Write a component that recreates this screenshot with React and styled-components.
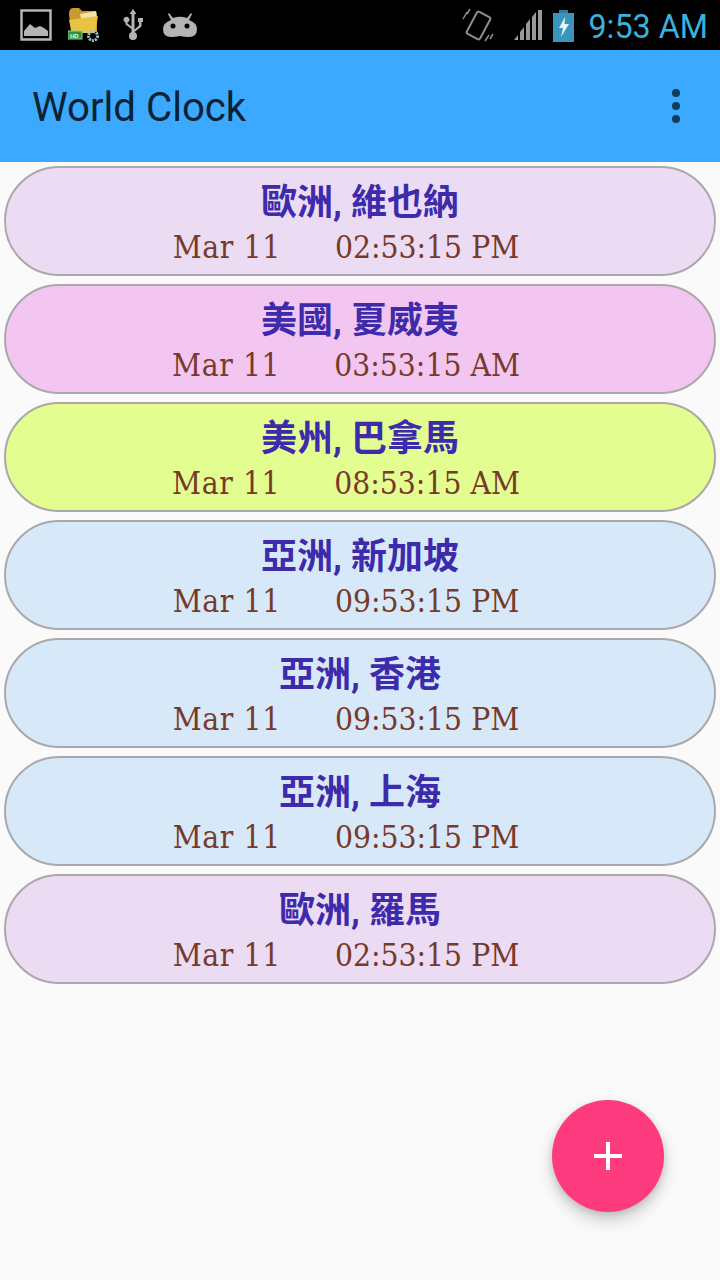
import React from "react";
import styled, { createGlobalStyle } from "styled-components";

const Global = createGlobalStyle`
  html, body { margin: 0; padding: 0; background: #fafafa; }
  #root { width: 720px; height: 1280px; }
`;
const Page = styled.div`
  position: relative; width: 720px; height: 1280px; overflow: hidden;
  background: #fafafa; display: flex; flex-direction: column;
`;
const StatusBar = styled.div`
  height: 50px; background: #000; display: flex; align-items: center; justify-content: space-between;
  padding: 0 12px 0 20px; box-sizing: border-box;
`;
const IconGroup = styled.div`display: flex; align-items: center;`;
const Glyph = styled.svg`
  flex: none;
  margin-left: ${p => p.$left || 0}px;
  margin-top: ${p => p.$top || 0}px;
`;
const Clock = styled.span`
  font: 400 32.3px/50px Roboto, sans-serif; color: #3ab2dc; margin-left: 14px; padding-top: 3px;
`;
const AppBar = styled.header`
  height: 112px; background: #3aa9ff; display: flex; align-items: center; justify-content: space-between;
  padding: 4px 40px 0 32px; box-sizing: border-box;
`;
const Title = styled.h1`
  margin: 0; font: 400 40.2px/1 Roboto, sans-serif; color: #0c2233;
`;
const Dots = styled.div`display: flex; flex-direction: column; gap: 5px; margin-top: -4px;`;
const Dot = styled.span`width: 8px; height: 8px; border-radius: 50%; background: #123c5c;`;
const List = styled.div`display: flex; flex-direction: column; gap: 8px; padding: 4px 4px 0;`;
const Row = styled.div`
  height: 110px; box-sizing: border-box; border: 2px solid #aaa8aa; border-radius: 55px;
  background: ${p => p.$bg}; display: flex; flex-direction: column; align-items: center;
`;
const City = styled.div`
  font: 700 36px/52px Roboto, "Noto Sans CJK TC", sans-serif; color: #3d2bac; margin-top: 9px;
  height: 46px;
`;
const When = styled.div`
  display: flex; gap: 54px; font: 400 31.5px/40px "DejaVu Serif Condensed", "DejaVu Serif", serif; color: #773a2a;
  margin-top: 4px; margin-right: 28px;
`;
const DateText = styled.span`letter-spacing: 0.6px;`;
const Fab = styled.button`
  position: absolute; left: 552px; top: 1100px; width: 112px; height: 112px; border: 0; border-radius: 50%;
  background: #ff3b7f; box-shadow: 0 8px 16px rgba(0,0,0,.2), 0 2px 6px rgba(0,0,0,.1);
  display: flex; align-items: center; justify-content: center; padding: 0;
`;

const rows = [
  ["歐洲, 維也納", "Mar 11", "02:53:15 PM", "#ecdcf3"],
  ["美國, 夏威夷", "Mar 11", "03:53:15 AM", "#f2c6f0"],
  ["美州, 巴拿馬", "Mar 11", "08:53:15 AM", "#e3fd91"],
  ["亞洲, 新加坡", "Mar 11", "09:53:15 PM", "#d7e9f9"],
  ["亞洲, 香港", "Mar 11", "09:53:15 PM", "#d7e9f9"],
  ["亞洲, 上海", "Mar 11", "09:53:15 PM", "#d7e9f9"],
  ["歐洲, 羅馬", "Mar 11", "02:53:15 PM", "#ecdcf3"],
];

const G = "#b4b4b4";
const PictureIcon = () => (
  <Glyph width="32" height="32" viewBox="0 0 32 32">
    <rect x="1.5" y="1.5" width="29" height="29" fill="none" stroke={G} strokeWidth="2.5" />
    <path d="M4 27V22L10 15L15 19L20 17L24 19L28 22V27Z" fill={G} />
  </Glyph>
);
const FolderIcon = () => (
  <Glyph width="34" height="34" viewBox="0 0 34 34" $left={16}>
    <path d="M1 6Q1 0 5 0H11L14 3H26Q29 3 29 8V24H3Z" fill="#c99a2c" />
    <path d="M12 6L28 3L29 12L14 15Z" fill="#f3e3a8" />
    <path d="M1 12L30 8L27 25H4Z" fill="#eac344" />
    <rect x="0" y="23" width="14" height="8" fill="#2f8f3a" stroke="#8fd08a" strokeWidth="1" />
    <text x="2" y="30" fontFamily="Liberation Sans" fontSize="6" fontWeight="700" fill="#e8ffe8">HD</text>
    <circle cx="25" cy="28" r="4.500" fill="none" stroke="#9fc0d0" strokeWidth="3" strokeDasharray="2 1" />
  </Glyph>
);
const UsbIcon = () => (
  <Glyph width="22" height="32" viewBox="0 0 22 32" $left={20}>
    <path d="M11 0L14.500 5H12.500V20.500L17 16.500V13H16V9H21V13H19.500V17.500L12.500 23V25H9.500V20L3.500 15.500V13.500A3 3 0 1 1 5.500 13.500V14.500L9.500 17.500V5H7.500Z" fill={G} />
    <circle cx="11" cy="27" r="4" fill={G} />
  </Glyph>
);
const AndroidIcon = () => (
  <Glyph width="36" height="28" viewBox="0 0 36 28" $left={18} $top={2}>
    <path d="M7 1L11 6Q18 3.500 25 6L29 1L30 2L27 8Q35 11 35 17Q35 25 27 25Q22 25 18 24Q14 25 9 25Q1 25 1 17Q1 11 9 8L6 2Z" fill={G} />
    <circle cx="11" cy="14" r="2.500" fill="#000" />
    <circle cx="25" cy="14" r="2.500" fill="#000" />
  </Glyph>
);
const VibrateIcon = () => (
  <Glyph width="32" height="34" viewBox="0 0 32 34" fill="none" stroke="#8e8e8e">
    <rect x="9" y="5" width="15" height="25" rx="2" strokeWidth="2" transform="rotate(28 16.500 17.500)" />
    <path d="M1 11L5 4M5 6L8 1M23 33L27 27M28 31L31 26" strokeWidth="1.500" />
  </Glyph>
);
const SignalIcon = () => (
  <Glyph width="30" height="32" viewBox="0 0 30 32" $left={19}>
    <path d="M1 31L5 26V31ZM7 31V23L11 18V31ZM13 31V15L17 10V31ZM19 31V8L23 3V31ZM25 31V1H29V31Z" fill="#9a9a9a" />
  </Glyph>
);
const BatteryIcon = () => (
  <Glyph width="21" height="32" viewBox="0 0 21 32" $left={10} $top={2}>
    <rect x="6" y="0" width="9" height="3" fill="#2f7c9c" />
    <rect x="0" y="3" width="21" height="29" fill="#3a95bd" />
    <path d="M12 7L6 18H10L8 27L16 14H11.500Z" fill="#e8f4f8" />
  </Glyph>
);

export default function App() {
  return (
    <Page>
      <Global />
      <StatusBar>
        <IconGroup>
          <PictureIcon />
          <FolderIcon />
          <UsbIcon />
          <AndroidIcon />
        </IconGroup>
        <IconGroup>
          <VibrateIcon />
          <SignalIcon />
          <BatteryIcon />
          <Clock>9:53 AM</Clock>
        </IconGroup>
      </StatusBar>
      <AppBar>
        <Title>World Clock</Title>
        <Dots><Dot /><Dot /><Dot /></Dots>
      </AppBar>
      <List>
        {rows.map(([city, date, time, bg]) => (
          <Row key={city} $bg={bg}>
            <City>{city}</City>
            <When><DateText>{date}</DateText><span>{time}</span></When>
          </Row>
        ))}
      </List>
      <Fab aria-label="Add">
        <svg width="30" height="30" viewBox="0 0 30 30"><path d="M13 1h4v12h12v4H17v12h-4V17H1v-4h12z" fill="#fff" /></svg>
      </Fab>
    </Page>
  );
}
